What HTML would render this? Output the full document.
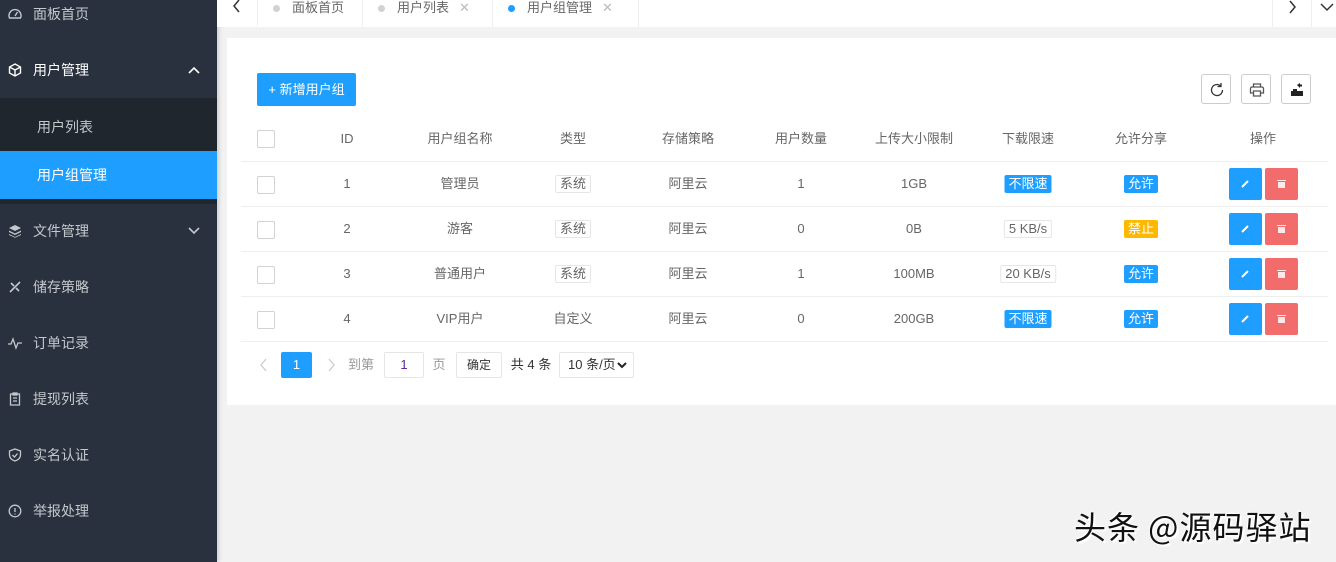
<!DOCTYPE html>
<html><head><meta charset="utf-8"><style>
*{margin:0;padding:0;box-sizing:border-box}
body{width:1336px;height:562px;overflow:hidden;background:#f2f2f2;font-family:"Liberation Sans","Noto Sans CJK SC",sans-serif;font-size:13px;color:#555;position:relative;line-height:18px}
.side{position:absolute;left:0;top:0;width:217px;height:562px;background:#28313d;box-shadow:2px 0 4px rgba(0,0,0,.15)}
.it{position:absolute;left:0;width:217px;height:48px;line-height:48px;color:#c4c8cd;font-size:14px;padding-left:33px}
.it svg{position:absolute;left:8px;top:17px}
.sub{position:absolute;left:0;top:98px;width:217px;height:106px;background:#1f262e}
.top{position:absolute;left:217px;top:0;right:0;height:27px;background:#fff}
.tab{position:absolute;top:0;height:27px;line-height:16px;border-right:1px solid #eee;font-size:13px;color:#666}
.dot{display:inline-block;width:7px;height:7px;border-radius:50%;background:#d2d2d2;margin-right:12px}
.x{color:#bbb;margin-left:10px}
.card{position:absolute;left:227px;top:38px;width:1109px;height:367px;background:#fff}
.btn{position:absolute;left:257px;top:73px;width:99px;height:33px;background:#1e9fff;color:#fff;border-radius:2px;line-height:33px;text-align:center;font-size:13px}
.ib{position:absolute;top:74px;width:30px;height:30px;border:1px solid #ccc;border-radius:3px}
.ib svg{position:absolute;left:7px;top:7px}
.c{position:absolute;transform:translateX(-50%);white-space:nowrap;font-size:13px;color:#666;line-height:18px;height:18px}
.hl{position:absolute;left:241px;width:1087px;height:1px;background:#eee}
.cb{position:absolute;left:257px;width:18px;height:18px;border:1px solid #d2d2d2;border-radius:2px;background:#fff}
.tag{position:absolute;transform:translateX(-50%);height:18px;line-height:18px;padding:0 4px;font-size:13px;border-radius:2px;white-space:nowrap}
.bl{background:#1e9fff;color:#fff}.yl{background:#ffb800;color:#fff}.ol{border:1px solid #e6e6e6;color:#666;line-height:16px}
.ed,.de{position:absolute;width:33px;height:32px;border-radius:2px}
.ed{left:1229px;background:#1e9fff}.de{left:1265px;background:#f26c6c}
</style></head><body>
<div class="side">
<div class="it" style="top:-10px"><svg width="14" height="14" viewBox="0 0 14 14" fill="none" stroke="#c4c8cd" stroke-width="1.4"><path d="M1.5 11A6 6 0 1 1 12.5 11Z"/><path d="M7 9L9.5 5"/></svg>面板首页</div>
<div class="it" style="top:46px;color:#fff"><svg width="14" height="14" viewBox="0 0 14 14" fill="none" stroke="#fff" stroke-width="1.4"><path d="M7 1L12.5 4V10L7 13L1.5 10V4Z M1.5 4L7 7L12.5 4 M7 7V13"/></svg>用户管理<svg style="left:188px;top:20px" width="12" height="8" viewBox="0 0 12 8" fill="none" stroke="#fff" stroke-width="1.6"><path d="M1 7L6 2L11 7"/></svg></div>
<div class="sub"></div>
<div class="it" style="top:103px;padding-left:37px">用户列表</div>
<div class="it" style="top:151px;padding-left:37px;background:#1e9fff;color:#fff;height:48px">用户组管理</div>
<div class="it" style="top:207px"><svg width="14" height="14" viewBox="0 0 14 14" fill="#c4c8cd"><path d="M7 1L13 4L7 7L1 4Z M1 6.5L7 9.5L13 6.5V8L7 11L1 8Z M1 10L7 13L13 10V11L7 13.8L1 11Z"/></svg>文件管理<svg style="left:188px;top:20px" width="12" height="8" viewBox="0 0 12 8" fill="none" stroke="#c4c8cd" stroke-width="1.6"><path d="M1 1L6 6L11 1"/></svg></div>
<div class="it" style="top:263px"><svg width="14" height="14" viewBox="0 0 14 14" fill="none" stroke="#c4c8cd" stroke-width="1.6"><path d="M2 12L12 2M3 3L6 6M8 8L11 11"/></svg>储存策略</div>
<div class="it" style="top:319px"><svg width="14" height="14" viewBox="0 0 14 14" fill="none" stroke="#c4c8cd" stroke-width="1.3"><path d="M0 8H3L5 3L8 12L10 7H14"/></svg>订单记录</div>
<div class="it" style="top:375px"><svg width="14" height="14" viewBox="0 0 14 14" fill="none" stroke="#c4c8cd" stroke-width="1.3"><path d="M2.5 2H11.5V13H2.5Z M5 1H9V3H5Z M5 6H9M5 9H9"/></svg>提现列表</div>
<div class="it" style="top:431px"><svg width="14" height="14" viewBox="0 0 14 14" fill="none" stroke="#c4c8cd" stroke-width="1.3"><path d="M7 1L12.5 3V7C12.5 10 10 12 7 13C4 12 1.5 10 1.5 7V3Z M4.5 7L6.5 9L9.5 5.5"/></svg>实名认证</div>
<div class="it" style="top:487px"><svg width="14" height="14" viewBox="0 0 14 14" fill="none" stroke="#c4c8cd" stroke-width="1.3"><circle cx="7" cy="7" r="5.8"/><path d="M7 4V8M7 9.5V10.5"/></svg>举报处理</div>
</div>
<div class="top">
<div class="tab" style="left:0;width:41px;text-align:center;top:-1px"><svg width="10" height="14" viewBox="0 0 10 14" fill="none" stroke="#333" stroke-width="1.5"><path d="M7 1L2 7L7 13"/></svg></div>
<div class="tab" style="left:41px;width:105px;padding-left:15px;top:0"><span class="dot"></span>面板首页</div>
<div class="tab" style="left:146px;width:130px;padding-left:15px"><span class="dot"></span>用户列表<span class="x">✕</span></div>
<div class="tab" style="left:276px;width:146px;padding-left:15px"><span class="dot" style="background:#1e9fff"></span>用户组管理<span class="x">✕</span></div>
<div class="tab" style="left:1055px;width:40px;border-left:1px solid #eee;text-align:center"><svg width="10" height="14" viewBox="0 0 10 14" fill="none" stroke="#333" stroke-width="1.5"><path d="M3 1L8 7L3 13"/></svg></div>
<div class="tab" style="left:1095px;width:30px;text-align:center;border:none"><svg width="14" height="10" viewBox="0 0 14 10" fill="none" stroke="#333" stroke-width="1.5"><path d="M1 2L7 8L13 2"/></svg></div>
</div>
<div class="card"></div>
<div class="btn">+ 新增用户组</div>
<div class="ib" style="left:1201px"><svg width="16" height="16" viewBox="0 0 16 16" fill="none" stroke="#333" stroke-width="1.3"><path d="M13.5 8A5.5 5.5 0 1 1 11.5 3.8M12 1V4.5H8.5"/></svg></div>
<div class="ib" style="left:1241px"><svg width="16" height="16" viewBox="0 0 16 16" fill="none" stroke="#555" stroke-width="1.3"><path d="M4.5 5V2H11.5V5M3 5H13A1.5 1.5 0 0 1 14.5 6.5V11H11.5M4.5 11H1.5V6.5A1.5 1.5 0 0 1 3 5M4.5 9H11.5V14H4.5Z"/></svg></div>
<div class="ib" style="left:1281px"><svg width="16" height="16" viewBox="0 0 16 16" fill="#222"><path d="M2 9H14V14H2Z M4 7H8V9H4Z M8 3L11 1V2.5H13V4.5H11V6Z"/></svg></div>
<div class="cb" style="top:130px"></div>
<div class="c" style="left:347px;top:130px">ID</div>
<div class="c" style="left:460px;top:130px">用户组名称</div>
<div class="c" style="left:573px;top:130px">类型</div>
<div class="c" style="left:688px;top:130px">存储策略</div>
<div class="c" style="left:801px;top:130px">用户数量</div>
<div class="c" style="left:914px;top:130px">上传大小限制</div>
<div class="c" style="left:1028px;top:130px">下载限速</div>
<div class="c" style="left:1141px;top:130px">允许分享</div>
<div class="c" style="left:1263px;top:130px">操作</div>
<div class="hl" style="top:161px"></div><div class="hl" style="top:206px"></div><div class="hl" style="top:251px"></div><div class="hl" style="top:296px"></div><div class="hl" style="top:341px"></div>

<div class="cb" style="top:176px"></div><div class="c" style="left:347px;top:175px">1</div><div class="c" style="left:460px;top:175px">管理员</div><div class="tag ol" style="left:573px;top:175px">系统</div><div class="c" style="left:688px;top:175px">阿里云</div><div class="c" style="left:801px;top:175px">1</div><div class="c" style="left:914px;top:175px">1GB</div><div class="tag bl" style="left:1028px;top:175px">不限速</div><div class="tag bl" style="left:1141px;top:175px">允许</div>
<div class="cb" style="top:221px"></div><div class="c" style="left:347px;top:220px">2</div><div class="c" style="left:460px;top:220px">游客</div><div class="tag ol" style="left:573px;top:220px">系统</div><div class="c" style="left:688px;top:220px">阿里云</div><div class="c" style="left:801px;top:220px">0</div><div class="c" style="left:914px;top:220px">0B</div><div class="tag ol" style="left:1028px;top:220px">5 KB/s</div><div class="tag yl" style="left:1141px;top:220px">禁止</div>
<div class="cb" style="top:266px"></div><div class="c" style="left:347px;top:265px">3</div><div class="c" style="left:460px;top:265px">普通用户</div><div class="tag ol" style="left:573px;top:265px">系统</div><div class="c" style="left:688px;top:265px">阿里云</div><div class="c" style="left:801px;top:265px">1</div><div class="c" style="left:914px;top:265px">100MB</div><div class="tag ol" style="left:1028px;top:265px">20 KB/s</div><div class="tag bl" style="left:1141px;top:265px">允许</div>
<div class="cb" style="top:311px"></div><div class="c" style="left:347px;top:310px">4</div><div class="c" style="left:460px;top:310px">VIP用户</div><div class="c" style="left:573px;top:310px">自定义</div><div class="c" style="left:688px;top:310px">阿里云</div><div class="c" style="left:801px;top:310px">0</div><div class="c" style="left:914px;top:310px">200GB</div><div class="tag bl" style="left:1028px;top:310px">不限速</div><div class="tag bl" style="left:1141px;top:310px">允许</div>

<div class="ed" style="top:168px"></div><div class="de" style="top:168px"></div>
<div class="ed" style="top:213px"></div><div class="de" style="top:213px"></div>
<div class="ed" style="top:258px"></div><div class="de" style="top:258px"></div>
<div class="ed" style="top:303px"></div><div class="de" style="top:303px"></div>
<svg style="position:absolute;left:0;top:0" width="1336" height="562">
<g stroke="#fff" stroke-width="2" fill="#fff">
<path d="M1242 187L1248 181M1242 232L1248 226M1242 277L1248 271M1242 322L1248 316"/>
</g>
<g fill="#fff" fill-opacity=".85">
<path d="M1277 180H1286V181H1277Z M1278 182H1285V188H1278Z"/>
<path d="M1277 225H1286V226H1277Z M1278 227H1285V233H1278Z"/>
<path d="M1277 270H1286V271H1277Z M1278 272H1285V278H1278Z"/>
<path d="M1277 315H1286V316H1277Z M1278 317H1285V323H1278Z"/>
</g>
<path d="M266 359L261 365L266 371" stroke="#ccc" stroke-width="1.3" fill="none"/>
<path d="M329 359L334 365L329 371" stroke="#ccc" stroke-width="1.3" fill="none"/>
</svg>
<div style="position:absolute;left:281px;top:352px;width:31px;height:26px;background:#1e9fff;color:#fff;text-align:center;line-height:26px;border-radius:2px">1</div>
<div class="c" style="left:361px;top:356px;color:#999">到第</div>
<div style="position:absolute;left:384px;top:352px;width:40px;height:26px;border:1px solid #e6e6e6;text-align:center;line-height:24px;color:#5b2a9a;border-radius:2px">1</div>
<div class="c" style="left:439px;top:356px;color:#999">页</div>
<div style="position:absolute;left:456px;top:352px;width:46px;height:26px;border:1px solid #e6e6e6;text-align:center;line-height:24px;color:#333;font-size:12px;border-radius:2px">确定</div>
<div class="c" style="left:531px;top:356px;color:#333">共 4 条</div>
<div style="position:absolute;left:559px;top:352px;width:75px;height:26px;border:1px solid #e6e6e6;line-height:24px;color:#333;padding-left:8px;border-radius:2px">10 条/页<svg style="position:absolute;right:6px;top:9px" width="10" height="7" viewBox="0 0 10 7" fill="none" stroke="#222" stroke-width="2"><path d="M1 1L5 5L9 1"/></svg></div>
<div style="position:absolute;left:1074px;top:506px;font-size:32px;line-height:40px;color:#111;text-shadow:2px 2px 1px #fff,-1px -1px 1px #fff;font-family:'Noto Sans CJK SC',sans-serif;letter-spacing:1px;white-space:nowrap">头条 @源码驿站</div>
</body></html>
